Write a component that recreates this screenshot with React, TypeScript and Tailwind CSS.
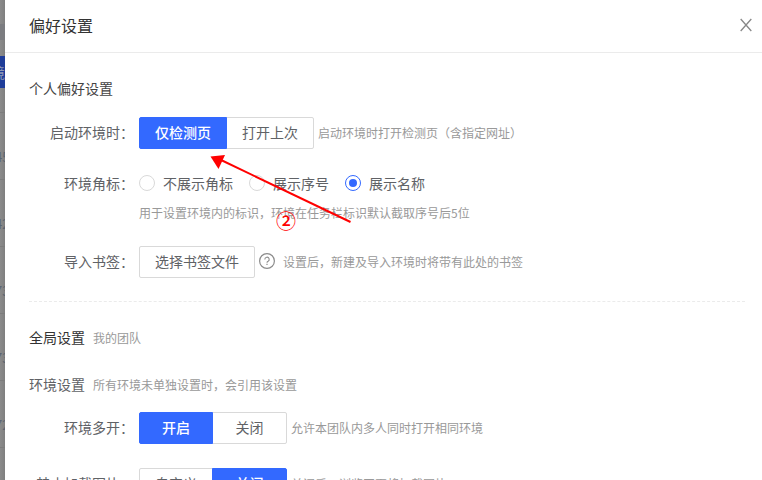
import type { ReactNode } from "react";

const cell = "flex h-[67px] shrink-0 items-center overflow-hidden border-b border-[#7c7c7c] pt-[22px]";

function Backdrop() {
  return (
    <aside
      aria-hidden="true"
      className="flex w-[5px] shrink-0 flex-col overflow-hidden bg-linear-to-r from-[#8b8b8b] to-[#7f7f7f] text-[13px] text-[#5c6470]"
    >
      <div className="h-6 shrink-0" />
      <div className="h-4 shrink-0 bg-[#7b7c80]" />
      <div className="h-4 shrink-0" />
      <div className="flex h-8 shrink-0 items-center justify-end overflow-hidden bg-[#1f3d99] text-sm text-[#8f99b5]">
        境
      </div>
      <div className="h-[25px] shrink-0 border-b border-[#7c7c7c]" />
      {["45", "42", "73", "73", "72"].map((n, i) => (
        <div key={i} className={cell}>
          <span className="-ml-[5px]">{n}</span>
        </div>
      ))}
    </aside>
  );
}

function Row({ label, children }: { label: string; children: ReactNode }) {
  return (
    <div role="group" aria-label={label} className="flex items-start">
      <span className="w-[105px] shrink-0 text-right leading-[30px] whitespace-nowrap text-[#606266]">
        {label}：
      </span>
      <div className="ml-[5px] min-w-0">{children}</div>
    </div>
  );
}

function Hint({ children, className = "" }: { children: ReactNode; className?: string }) {
  return <span className={`text-xs text-[#999999] ${className}`}>{children}</span>;
}

function Segmented({ options, active }: { options: string[]; active: number }) {
  return (
    <div className="flex">
      {options.map((text, i) => (
        <button
          key={text}
          type="button"
          aria-pressed={i === active}
          className={`h-8 min-w-[74px] border px-[15px] pb-[2px] first:rounded-l-xs last:-ml-px last:min-w-[75px] last:rounded-r-xs ${
            i === active
              ? "relative border-[#3369ff] bg-[#3369ff] font-medium text-white"
              : "border-[#d9d9d9] bg-white text-[#606266]"
          }`}
        >
          {text}
        </button>
      ))}
    </div>
  );
}

function Choice({ text, checked }: { text: string; checked?: boolean }) {
  return (
    <label className="flex h-[30px] items-center gap-2 text-[#606266]">
      <input
        type="radio"
        name="badge"
        defaultChecked={checked}
        className="size-4 appearance-none rounded-full border border-[#d9d9d9] bg-white checked:border-[#3369ff] checked:bg-[#3369ff] checked:bg-clip-content checked:p-[3px]"
      />
      {text}
    </label>
  );
}

export default function App() {
  return (
    <div className="flex h-screen overflow-hidden bg-white font-['Noto_Sans_CJK_SC',sans-serif] text-sm">
      <Backdrop />
      <main className="relative min-w-0 flex-1 overflow-hidden">
        <header className="flex h-[53px] items-center justify-between border-b border-[#ebebeb] pr-[10px] pl-6">
          <h1 className="pb-[2px] text-base text-[#333333]">偏好设置</h1>
          <button type="button" aria-label="关闭窗口" className="pb-[2px] text-[#888888]">
            <svg width="12" height="14" viewBox="0 0 12 14" fill="none" stroke="currentColor" strokeWidth="1.3">
              <path d="M.7 1 11.3 13M11.3 1 .7 13" />
            </svg>
          </button>
        </header>

        <div className="pt-[25px] pr-[17px] pl-6">
          <h2 className="leading-5 text-[#444444]">个人偏好设置</h2>
          <div className="mt-[19px]">
            <Row label="启动环境时">
              <div className="flex items-center gap-1">
                <Segmented options={["仅检测页", "打开上次"]} active={0} />
                <Hint>启动环境时打开检测页（含指定网址）</Hint>
              </div>
            </Row>
          </div>
          <div className="mt-[19px]">
            <Row label="环境角标">
              <div className="flex gap-4">
                <Choice text="不展示角标" />
                <Choice text="展示序号" />
                <Choice text="展示名称" checked />
              </div>
              <Hint className="mt-[5px] block leading-5">用于设置环境内的标识，环境在任务栏标识默认截取序号后5位</Hint>
            </Row>
          </div>
          <div className="mt-[23px]">
            <Row label="导入书签">
              <div className="flex items-center">
                <button type="button" className="h-8 rounded-xs border border-[#d9d9d9] px-[15px] pb-[2px] text-[#606266]">
                  选择书签文件
                </button>
                <span className="ml-1 pb-[2px]">
                  <svg width="16" height="16" viewBox="0 0 16 16" fill="none" stroke="#8c8c8c">
                    <circle cx="8" cy="8" r="7.4" strokeWidth="1.2" />
                    <path d="M5.8 6.4a2.2 2.2 0 1 1 3.3 1.9c-.8.4-1.1.8-1.1 1.5" strokeWidth="1.1" />
                    <path d="M8 10.8v1.2" strokeWidth="1.2" />
                  </svg>
                </span>
                <Hint className="ml-2">设置后，新建及导入环境时将带有此处的书签</Hint>
              </div>
            </Row>
          </div>

          <hr className="mt-[23px] border-t border-dashed border-[#ebebeb]" />

          <div className="mt-[25px] flex items-baseline gap-2">
            <h2 className="leading-5 text-[#333333]">全局设置</h2>
            <Hint>我的团队</Hint>
          </div>
          <div className="mt-[27px] flex items-baseline gap-2">
            <h3 className="leading-5 text-[#606266]">环境设置</h3>
            <Hint>所有环境未单独设置时，会引用该设置</Hint>
          </div>
          <div className="mt-[18px] flex flex-col gap-6">
            <Row label="环境多开">
              <div className="flex items-center gap-1">
                <Segmented options={["开启", "关闭"]} active={0} />
                <Hint>允许本团队内多人同时打开相同环境</Hint>
              </div>
            </Row>
            <Row label="禁止加载图片">
              <div className="flex items-center gap-1">
                <Segmented options={["自定义", "关闭"]} active={1} />
                <Hint>关闭后，浏览网页将加载图片</Hint>
              </div>
            </Row>
          </div>
        </div>

        <svg
          className="pointer-events-none absolute top-[153px] left-[204px]"
          width="144"
          height="72"
          viewBox="0 0 144 72"
          aria-hidden="true"
        >
          <path d="M11 6.5 141.5 69" stroke="#ff0000" strokeWidth="2" />
          <path d="M1.5 3.5 16 2 9.5 16Z" fill="#ff0000" />
        </svg>
        <span className="pointer-events-none absolute top-[209px] left-[271px] text-xl leading-6 font-medium text-[#ff0000]">
          ②
        </span>
      </main>
    </div>
  );
}
